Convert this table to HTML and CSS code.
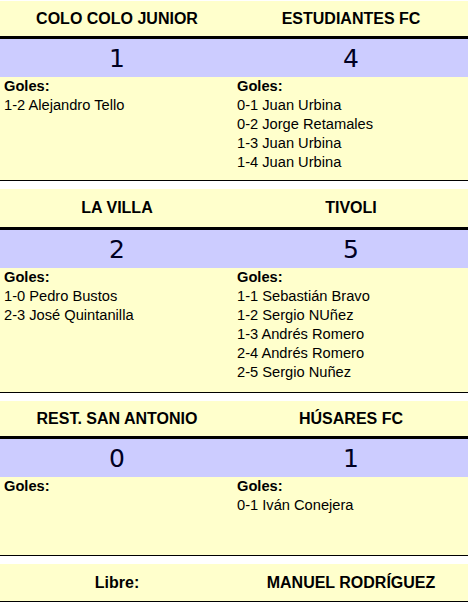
FILE: index.html
```html
<!DOCTYPE html>
<html>
<head>
<meta charset="utf-8">
<link rel="stylesheet" href="styles.css">
</head>
<body>
<div class="sheet">
  <section class="match">
    <div class="teams"><div>COLO COLO JUNIOR</div><div>ESTUDIANTES FC</div></div>
    <div class="score"><div>1</div><div>4</div></div>
    <div class="goals g4">
      <div><b>Goles:</b><span>1-2 Alejandro Tello</span></div>
      <div><b>Goles:</b><span>0-1 Juan Urbina</span><span>0-2 Jorge Retamales</span><span>1-3 Juan Urbina</span><span>1-4 Juan Urbina</span></div>
    </div>
  </section>
  <section class="match">
    <div class="teams tall"><div>LA VILLA</div><div>TIVOLI</div></div>
    <div class="score"><div>2</div><div>5</div></div>
    <div class="goals g5">
      <div><b>Goles:</b><span>1-0 Pedro Bustos</span><span>2-3 José Quintanilla</span></div>
      <div><b>Goles:</b><span>1-1 Sebastián Bravo</span><span>1-2 Sergio NUñez</span><span>1-3 Andrés Romero</span><span>2-4 Andrés Romero</span><span>2-5 Sergio Nuñez</span></div>
    </div>
  </section>
  <section class="match">
    <div class="teams"><div>REST. SAN ANTONIO</div><div>HÚSARES FC</div></div>
    <div class="score"><div>0</div><div>1</div></div>
    <div class="goals g1">
      <div><b>Goles:</b></div>
      <div><b>Goles:</b><span>0-1 Iván Conejera</span></div>
    </div>
  </section>
  <section class="libre">
    <div>Libre:</div><div>MANUEL RODRÍGUEZ</div>
  </section>
</div>
</body>
</html>
```
FILE: styles.css
```css
* { box-sizing: border-box; }
html, body { margin: 0; padding: 0; background: #fff; }
body {
  font-family: "Liberation Sans", Arial, sans-serif;
  color: #000;
}
.sheet {
  width: 468px;
  padding-top: 1px;
  margin-left: 0;
}
.match {
  border-bottom: 1px solid #000;
  margin-bottom: 8px;
}
.teams, .score, .goals, .libre {
  display: grid;
  grid-template-columns: 234px 234px;
}
.teams {
  background: #ffffcc;
  height: 38px;
  border-bottom: 3px solid #000;
  font-weight: bold;
  font-size: 16px;
  align-items: center;
  text-align: center;
}
.teams.tall { height: 41px; }
.score {
  background: #ccccff;
  height: 38px;
  font-family: "DejaVu Sans", Verdana, sans-serif;
  font-size: 25px;
  align-items: center;
  text-align: center;
  color: #000022;
}
.goals {
  background: #ffffcc;
  font-size: 14.67px;
  line-height: 19px;
  padding-top: 0;
}
.goals > div {
  display: flex;
  flex-direction: column;
  padding-left: 4px;
}
.goals > div:last-child { padding-left: 3px; }
.g4 { height: 103px; }
.g5 { height: 124px; }
.g1 { height: 78px; }
.libre {
  background: #ffffcc;
  height: 39px;
  border-bottom: 2px solid #000;
  font-weight: bold;
  font-size: 16px;
  align-items: center;
  text-align: center;
}
```
